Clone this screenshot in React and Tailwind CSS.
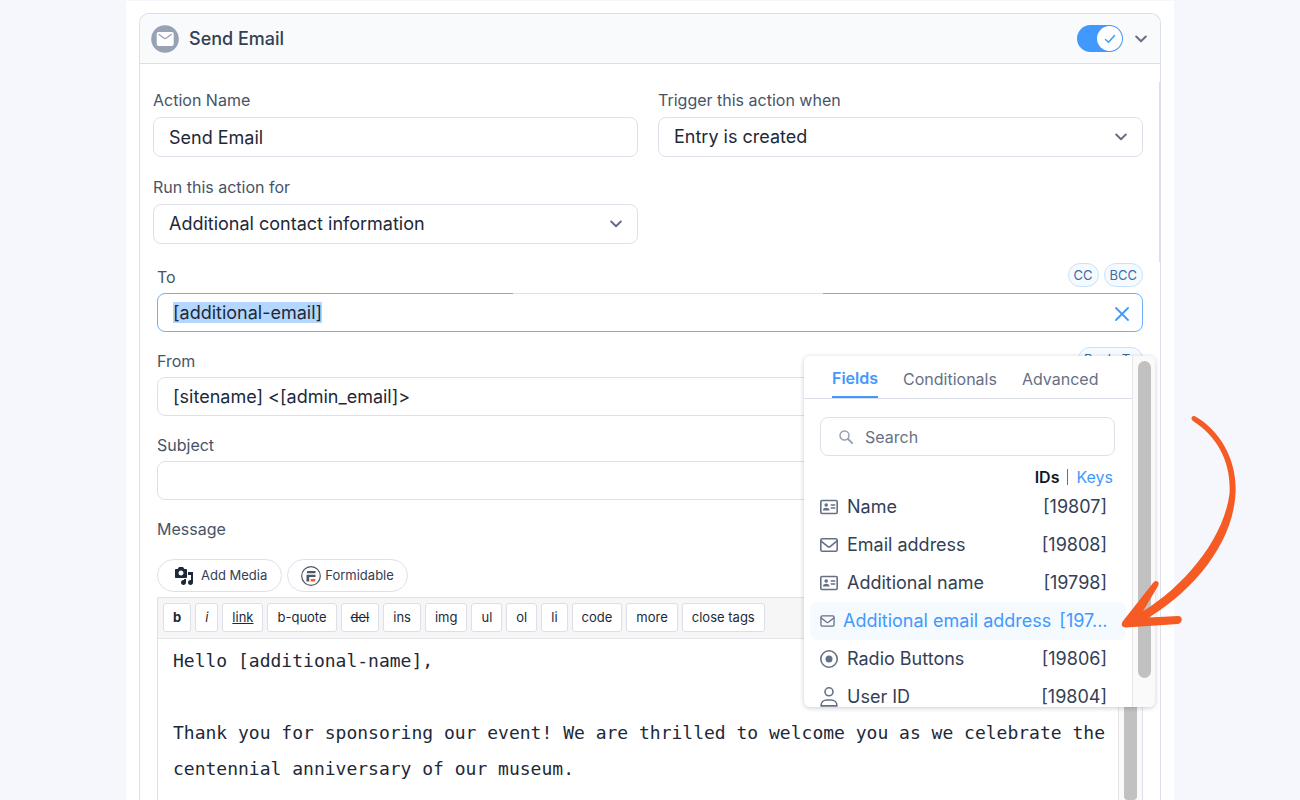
import { useEffect, useRef } from 'react';

const inputClass =
  'w-full rounded-lg border border-[#dfe1ea] bg-white px-[15px] text-lg text-[#1d2939] outline-none';

const fields = [
  { icon: 'card', name: 'Name', id: '[19807]' },
  { icon: 'mail', name: 'Email address', id: '[19808]' },
  { icon: 'card', name: 'Additional name', id: '[19798]' },
  { icon: 'mail', name: 'Additional email address', id: '[197...', active: true },
  { icon: 'radio', name: 'Radio Buttons', id: '[19806]' },
  { icon: 'user', name: 'User ID', id: '[19804]' },
];

const tags = [
  { label: 'b', className: 'font-bold' },
  { label: 'i', className: 'italic' },
  { label: 'link', className: 'underline' },
  { label: 'b-quote' },
  { label: 'del', className: 'line-through' },
  { label: 'ins' },
  { label: 'img' },
  { label: 'ul' },
  { label: 'ol' },
  { label: 'li' },
  { label: 'code' },
  { label: 'more' },
  { label: 'close tags' },
];

const message = `Hello [additional-name],

Thank you for sponsoring our event! We are thrilled to welcome you as we celebrate the centennial anniversary of our museum.`;

const Chevron = ({ className }) => (
  <svg viewBox="0 0 12 8" className={className} fill="none" stroke="#667085" strokeWidth="2" strokeLinecap="round" strokeLinejoin="round">
    <path d="M1.2 1.5 6 6.2l4.8-4.7" />
  </svg>
);

const FieldIcon = ({ type, className }) => (
  <svg viewBox="0 0 18 20" className={className} fill="none" stroke="#667085" strokeWidth="1.6" strokeLinecap="round" strokeLinejoin="round">
    {type === 'card' && (
      <>
        <rect x="0.8" y="3.5" width="16.4" height="13" rx="1.2" />
        <circle cx="6.2" cy="8" r="1.8" fill="#667085" stroke="none" />
        <path d="M2.9 13.4c0-1.7 1.4-2.7 3.3-2.7s3.3 1 3.3 2.7z" fill="#667085" stroke="none" />
        <path d="M11.3 8h3.4M11.3 11h3.4" />
      </>
    )}
    {type === 'mail' && (
      <>
        <rect x="0.8" y="3.7" width="16.4" height="12.6" rx="1.6" />
        <path d="m1.2 6.2 6.4 5.2c.8.7 2 .7 2.8 0l6.4-5.2" />
      </>
    )}
    {type === 'radio' && (
      <>
        <circle cx="9" cy="10" r="8.2" />
        <circle cx="9" cy="10" r="3.5" fill="#667085" stroke="none" />
      </>
    )}
    {type === 'user' && (
      <>
        <circle cx="9" cy="4.8" r="4" />
        <path d="M1 18.9c0-3.6 2.6-5.9 6-5.9h4c3.4 0 6 2.3 6 5.9z" />
      </>
    )}
  </svg>
);

const Pill = ({ children }) => (
  <button type="button" className="-mt-0.5 h-6 rounded-full border border-[#c9e2fd] bg-[#f5faff] px-[5px] text-[13px] leading-5 text-[#3a6cab]">
    {children}
  </button>
);

const Select = ({ id, label, value }) => (
  <div className="flex flex-col gap-[5px]">
    <label htmlFor={id} className="text-base leading-6 text-[#475467]">{label}</label>
    <div className="relative">
      <select id={id} className={`${inputClass} h-10 appearance-none`}>
        <option>{value}</option>
      </select>
      <Chevron className="pointer-events-none absolute right-4 top-4 h-2 w-3" />
    </div>
  </div>
);

const FieldsPopup = () => (
  <div className="absolute -right-3 top-[91px] z-10 flex h-[351px] w-[351px] rounded-md bg-white shadow-[0_1px_5px_rgba(16,24,40,0.22)]">
    <div className="flex min-w-0 flex-1 flex-col overflow-hidden">
      <div className="flex h-[43px] shrink-0 gap-[25px] border-b border-[#dcdfea] pl-7 text-base text-[#667085]">
        <button type="button" className="border-b-2 border-[#4199fd] pt-1 font-semibold text-[#4199fd]">Fields</button>
        <button type="button" className="pt-1">Conditionals</button>
        <button type="button" className="pt-1">Advanced</button>
      </div>
      <div className="ml-4 mr-[17px] mt-[18px] flex h-[39px] shrink-0 items-center gap-3 rounded-lg border border-[#dfe1ea] pl-[18px]">
        <svg viewBox="0 0 14 14" className="h-3.5 w-3.5 shrink-0" fill="none" stroke="#98a2b3" strokeWidth="1.5" strokeLinecap="round">
          <circle cx="5.5" cy="5.5" r="4.5" />
          <path d="m9 9 4.2 4.2" strokeWidth="1.9" />
        </svg>
        <input type="search" aria-label="Search" placeholder="Search" className="min-w-0 flex-1 bg-transparent text-base outline-none placeholder:text-[#667085]" />
      </div>
      <div className="mr-[19px] mt-[9px] flex h-[23px] shrink-0 items-center justify-end gap-2 text-base">
        <button type="button" className="font-semibold text-[#101828]">IDs</button>
        <span className="h-4 w-px bg-[#667085]" />
        <button type="button" className="text-[#4199fd]">Keys</button>
      </div>
      <ul className="px-1.5 text-lg text-[#344054]">
        {fields.map((field) => (
          <li key={field.name}>
            <button
              type="button"
              className={`flex h-[38px] w-full items-center rounded-lg pl-2.5 pr-[19px] text-left ${
                field.active ? 'gap-2 bg-[#f5faff] text-[#4199fd]' : 'gap-[9px]'
              }`}
            >
              <FieldIcon type={field.icon} className={field.active ? 'h-4 w-[15px] shrink-0' : 'h-5 w-[18px] shrink-0'} />
              <span className="whitespace-nowrap">{field.name}</span>
              <span className="ml-auto">{field.id}</span>
            </button>
          </li>
        ))}
      </ul>
    </div>
    <div className="w-[23px] shrink-0 rounded-r-md border-l border-[#e6e6e6] bg-[#fafafa] px-[5px] pt-[5px]">
      <div className="h-[317px] w-[13px] rounded-full bg-[#c1c1c1]" />
    </div>
    <svg viewBox="0 0 120 220" className="pointer-events-none absolute left-[316px] top-[57px] h-[220px] w-[120px]" fill="#f55b22">
      <path d="M75 3.2C101 18 117.500 48 115.500 81C112.500 132 72 180 23 208L15 203C60 178 103 129 109.500 81C111.500 50 98 24 73 8C70 5.500 72 1.800 75 3.2z" />
      <path d="M37.5 168.5C39 169.5 39 171 38 173L19 205L58 203C63 203 63 210 58 211L6 214.5C1 214 1 211 3 208L33 170C35 167.5 36 167.5 37.5 168.5z" />
    </svg>
  </div>
);

const App = () => {
  const toRef = useRef(null);

  useEffect(() => {
    toRef.current.focus();
    toRef.current.select();
  }, []);

  return (
    <div className="flex min-h-screen flex-col overflow-hidden bg-[#f5f7fd] pt-px font-['Inter',sans-serif]">
      <main className="mx-auto flex w-full max-w-[1048px] flex-1 flex-col bg-white px-[13px] pt-3">
        <div className="flex flex-1 flex-col rounded-t-[10px] border border-b-0 border-[#dcdfea]">
          <header className="flex h-[50px] items-center rounded-t-[10px] border-b border-[#dcdfea] bg-[#f9fafb] pl-[11px] pr-[13px]">
            <svg viewBox="0 0 28 28" className="h-7 w-7">
              <circle cx="14" cy="14" r="13.8" fill="#98a2b5" />
              <rect x="5.7" y="7" width="17" height="14" rx="2" fill="#fff" />
              <path d="m8 9.5 4.8 3.6c.8.6 1.7.6 2.5 0l5-3.6" fill="none" stroke="#98a2b5" strokeWidth="1.3" strokeLinecap="round" />
            </svg>
            <h1 className="ml-2.5 text-lg font-medium text-[#344054]">Send Email</h1>
            <label className="ml-auto flex h-[27px] w-[46px] cursor-pointer justify-end rounded-full bg-[#4199fd] p-px">
              <input type="checkbox" defaultChecked aria-label="Enable action" className="sr-only" />
              <span className="flex h-[25px] w-[25px] items-center justify-center rounded-full bg-white">
                <svg viewBox="0 0 12 10" className="h-2.5 w-3" fill="none" stroke="#4199fd" strokeWidth="1.5" strokeLinecap="round" strokeLinejoin="round">
                  <path d="m1.5 5.5 3 2.8 6-6.8" />
                </svg>
              </span>
            </label>
            <button type="button" aria-label="Collapse" className="ml-3 flex">
              <Chevron className="h-2 w-3" />
            </button>
          </header>

          <section className="mt-[18px] grid grid-cols-2 gap-x-5 gap-y-[18px] border-r border-[#dcdfea] pb-[18px] pl-[13px] pr-4 pt-1.5">
            <div className="flex flex-col gap-[5px]">
              <label htmlFor="action-name" className="text-base leading-6 text-[#475467]">Action Name</label>
              <input id="action-name" defaultValue="Send Email" className={`${inputClass} h-10`} />
            </div>
            <Select id="trigger" label="Trigger this action when" value="Entry is created" />
            <Select id="run-for" label="Run this action for" value="Additional contact information" />
          </section>

          <section className="flex flex-1 flex-col gap-[17px] px-[17px] pt-[3px]">
            <div className="relative flex flex-col gap-1">
              <div className="flex h-6 justify-between">
                <label htmlFor="to" className="text-base leading-6 text-[#475467]">To</label>
                <div className="flex gap-[5px]">
                  <Pill>CC</Pill>
                  <Pill>BCC</Pill>
                </div>
              </div>
              <div className="relative">
                <input
                  id="to"
                  ref={toRef}
                  defaultValue="[additional-email]"
                  className="block h-[39px] w-full rounded-lg border border-[#6bb0fd] bg-white px-[15px] text-lg leading-[26px] text-[#1d2939] outline-none selection:bg-[#b3d7ff] selection:text-[#1d2939]"
                />
                <span className="absolute left-[356px] right-[320px] top-0 h-px bg-[#d3e4f8]" />
                <button type="button" aria-label="Close field list" className="absolute right-3.5 top-3.5">
                  <svg viewBox="0 0 14 14" className="h-3.5 w-3.5" fill="none" stroke="#4199fd" strokeWidth="1.8" strokeLinecap="round">
                    <path d="m1 1 12 12M13 1 1 13" />
                  </svg>
                </button>
              </div>
              <FieldsPopup />
            </div>

            <div className="flex flex-col gap-1">
              <div className="flex h-6 justify-between">
                <label htmlFor="from" className="text-base leading-6 text-[#475467]">From</label>
                <Pill>Reply To</Pill>
              </div>
              <input id="from" defaultValue="[sitename] <[admin_email]>" className={`${inputClass} h-[39px]`} />
            </div>

            <div className="flex flex-col gap-1">
              <label htmlFor="subject" className="text-base leading-6 text-[#475467]">Subject</label>
              <input id="subject" className={`${inputClass} h-[39px]`} />
            </div>

            <div className="flex flex-1 flex-col">
              <label htmlFor="message" className="text-base leading-6 text-[#475467]">Message</label>
              <div className="mb-[5px] mt-[18px] flex gap-[5px] text-[13px] text-[#344054]">
                <button type="button" className="flex h-[33px] items-center gap-[7px] rounded-full border border-[#dfe1ea] pl-4 pr-3.5">
                  <svg viewBox="0 0 20 20" className="h-5 w-5" fill="#1d2939">
                    <path d="M13 11V4c0-.55-.45-1-1-1h-1.67L9 1H5L3.67 3H2c-.55 0-1 .45-1 1v7c0 .55.45 1 1 1h10c.55 0 1-.45 1-1zM7 4.5c1.38 0 2.5 1.12 2.5 2.5S8.38 9.5 7 9.5 4.5 8.38 4.5 7 5.62 4.5 7 4.5zM14 6h5v10.5c0 1.38-1.12 2.5-2.5 2.5S14 17.88 14 16.5s1.12-2.5 2.5-2.5c.17 0 .34.02.5.05V9h-3V6zm-4 8.05V13h2v3.5c0 1.38-1.12 2.5-2.5 2.5S7 17.88 7 16.5 8.12 14 9.5 14c.17 0 .34.02.5.05z" />
                  </svg>
                  Add Media
                </button>
                <button type="button" className="flex h-[33px] items-center gap-1 rounded-full border border-[#dfe1ea] px-[13px]">
                  <svg viewBox="0 0 20 20" className="h-5 w-5">
                    <circle cx="10" cy="10" r="9.3" fill="none" stroke="#4d5568" strokeWidth="1.2" />
                    <path d="M6.3 5h8.2v2.2H5.7zM5.5 8.8h9V11H8.2v4.4H5.5z" fill="#4d5568" />
                    <path d="M9.7 12.9h4.8l-.6 2.5H9.7z" fill="#f55b22" />
                  </svg>
                  Formidable
                </button>
              </div>

              <div className="flex flex-1 flex-col border border-b-0 border-[#dfe1ea]">
                <div className="flex gap-1 border-b border-[#e4e5ea] bg-[#f6f6f7] pb-1.5 pl-[5px] pt-[5px]">
                  {tags.map((tag) => (
                    <button
                      key={tag.label}
                      type="button"
                      className={`h-[29px] rounded-[3px] border border-[#dcdfea] bg-white px-[9px] text-[13px] text-[#1d2939] ${tag.className ?? ''}`}
                    >
                      {tag.label}
                    </button>
                  ))}
                </div>
                <div className="flex flex-1">
                  <textarea
                    id="message"
                    defaultValue={message}
                    className="block flex-1 resize-none overflow-hidden pl-[15px] pr-1 pt-1 font-['DejaVu_Sans_Mono',monospace] text-lg leading-9 text-[#1d2939] outline-none"
                  />
                  <div className="w-6 border-l border-[#e6e6e6] bg-[#fafafa] px-[5px]">
                    <div className="h-full w-[13px] rounded-b bg-[#c1c1c1]" />
                  </div>
                </div>
              </div>
            </div>
          </section>
        </div>
      </main>
    </div>
  );
};

export default App;
